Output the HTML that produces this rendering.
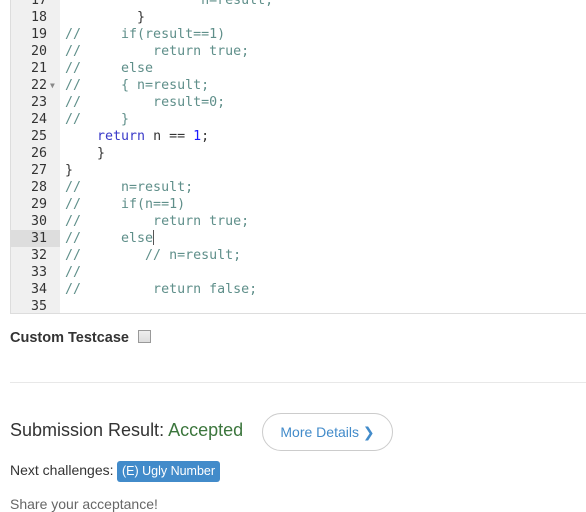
<!DOCTYPE html><html><head><style>
body{margin:0;width:586px;height:508px;overflow:hidden;background:#fff;font-family:"Liberation Sans",sans-serif;position:relative}
.ed{position:absolute;left:10px;top:0;width:576px;height:313px;border-bottom:1px solid #ddd;overflow:hidden}
.gut{position:absolute;left:0;top:0;width:49px;height:313px;background:#f0f0f0;border-left:1px solid #ddd}
.ln{position:absolute;left:0;height:17px;line-height:17px;font-family:"DejaVu Sans Mono",monospace;font-size:13.3px;white-space:pre;color:#333}
.num{width:37px;text-align:right}
.hl{background:#ddd;width:50px;left:0}
.code{left:55px;color:#5f8f8a}
.k{color:#3a3ac8}.n{color:#1a1aff}.p{color:#333}
.cur{border-left:1px solid #555;display:inline-block;height:15px;vertical-align:middle}
</style></head><body>
<div class="ed"><div class="gut"></div>
<div class="ln hl" style="top:229.5px"></div>
<div class="ln num" style="top:-8.5px">17</div><div class="ln code" style="top:-8.5px">                 n=result;</div>
<div class="ln num" style="top:8.5px">18</div><div class="ln code" style="top:8.5px"><span class="p">         }</span></div>
<div class="ln num" style="top:25.5px">19</div><div class="ln code" style="top:25.5px">//     if(result==1)</div>
<div class="ln num" style="top:42.5px">20</div><div class="ln code" style="top:42.5px">//         return true;</div>
<div class="ln num" style="top:59.5px">21</div><div class="ln code" style="top:59.5px">//     else</div>
<div class="ln num" style="top:76.5px">22</div><div class="ln" style="top:76.5px;left:40px;font-size:8px;color:#888">▼</div><div class="ln code" style="top:76.5px">//     { n=result;</div>
<div class="ln num" style="top:93.5px">23</div><div class="ln code" style="top:93.5px">//         result=0;</div>
<div class="ln num" style="top:110.5px">24</div><div class="ln code" style="top:110.5px">//     }</div>
<div class="ln num" style="top:127.5px">25</div><div class="ln code" style="top:127.5px">    <span class="k">return</span><span class="p"> n == </span><span class="n">1</span><span class="p">;</span></div>
<div class="ln num" style="top:144.5px">26</div><div class="ln code" style="top:144.5px"><span class="p">    }</span></div>
<div class="ln num" style="top:161.5px">27</div><div class="ln code" style="top:161.5px"><span class="p">}</span></div>
<div class="ln num" style="top:178.5px">28</div><div class="ln code" style="top:178.5px">//     n=result;</div>
<div class="ln num" style="top:195.5px">29</div><div class="ln code" style="top:195.5px">//     if(n==1)</div>
<div class="ln num" style="top:212.5px">30</div><div class="ln code" style="top:212.5px">//         return true;</div>
<div class="ln num" style="top:229.5px">31</div><div class="ln code" style="top:229.5px">//     else<span class="cur"></span></div>
<div class="ln num" style="top:246.5px">32</div><div class="ln code" style="top:246.5px">//        // n=result;</div>
<div class="ln num" style="top:263.5px">33</div><div class="ln code" style="top:263.5px">//</div>
<div class="ln num" style="top:280.5px">34</div><div class="ln code" style="top:280.5px">//         return false;</div>
<div class="ln num" style="top:297.5px">35</div>
</div>
<div style="position:absolute;left:10px;top:330px;font-size:14.5px;font-weight:bold;color:#333">Custom Testcase</div>
<div style="position:absolute;left:138px;top:330px;width:11px;height:11px;border:1px solid #999;background:linear-gradient(#eee,#ddd)"></div>
<div style="position:absolute;left:10px;top:382px;width:576px;height:1px;background:#e8e8e8"></div>
<div style="position:absolute;left:10px;top:420px;font-size:18px;color:#333">Submission Result: <span style="color:#3c763d">Accepted</span></div>
<div style="position:absolute;left:262px;top:413px;width:129px;height:36px;border:1px solid #ccc;border-radius:19px;box-sizing:content-box;color:#428bca;font-size:14px;line-height:36px;text-align:center">More Details <b style="font-size:14px;font-family:'DejaVu Sans',sans-serif">❯</b></div>
<div style="position:absolute;left:10px;top:462px;font-size:14px;color:#333">Next challenges:</div>
<div style="position:absolute;left:117px;top:461px;width:103px;height:21px;background:#428bca;border-radius:3px;color:#fff;font-size:12.5px;line-height:21px;text-align:center">(E) Ugly Number</div>
<div style="position:absolute;left:10px;top:496px;font-size:14px;color:#666">Share your acceptance!</div>
</body></html>
